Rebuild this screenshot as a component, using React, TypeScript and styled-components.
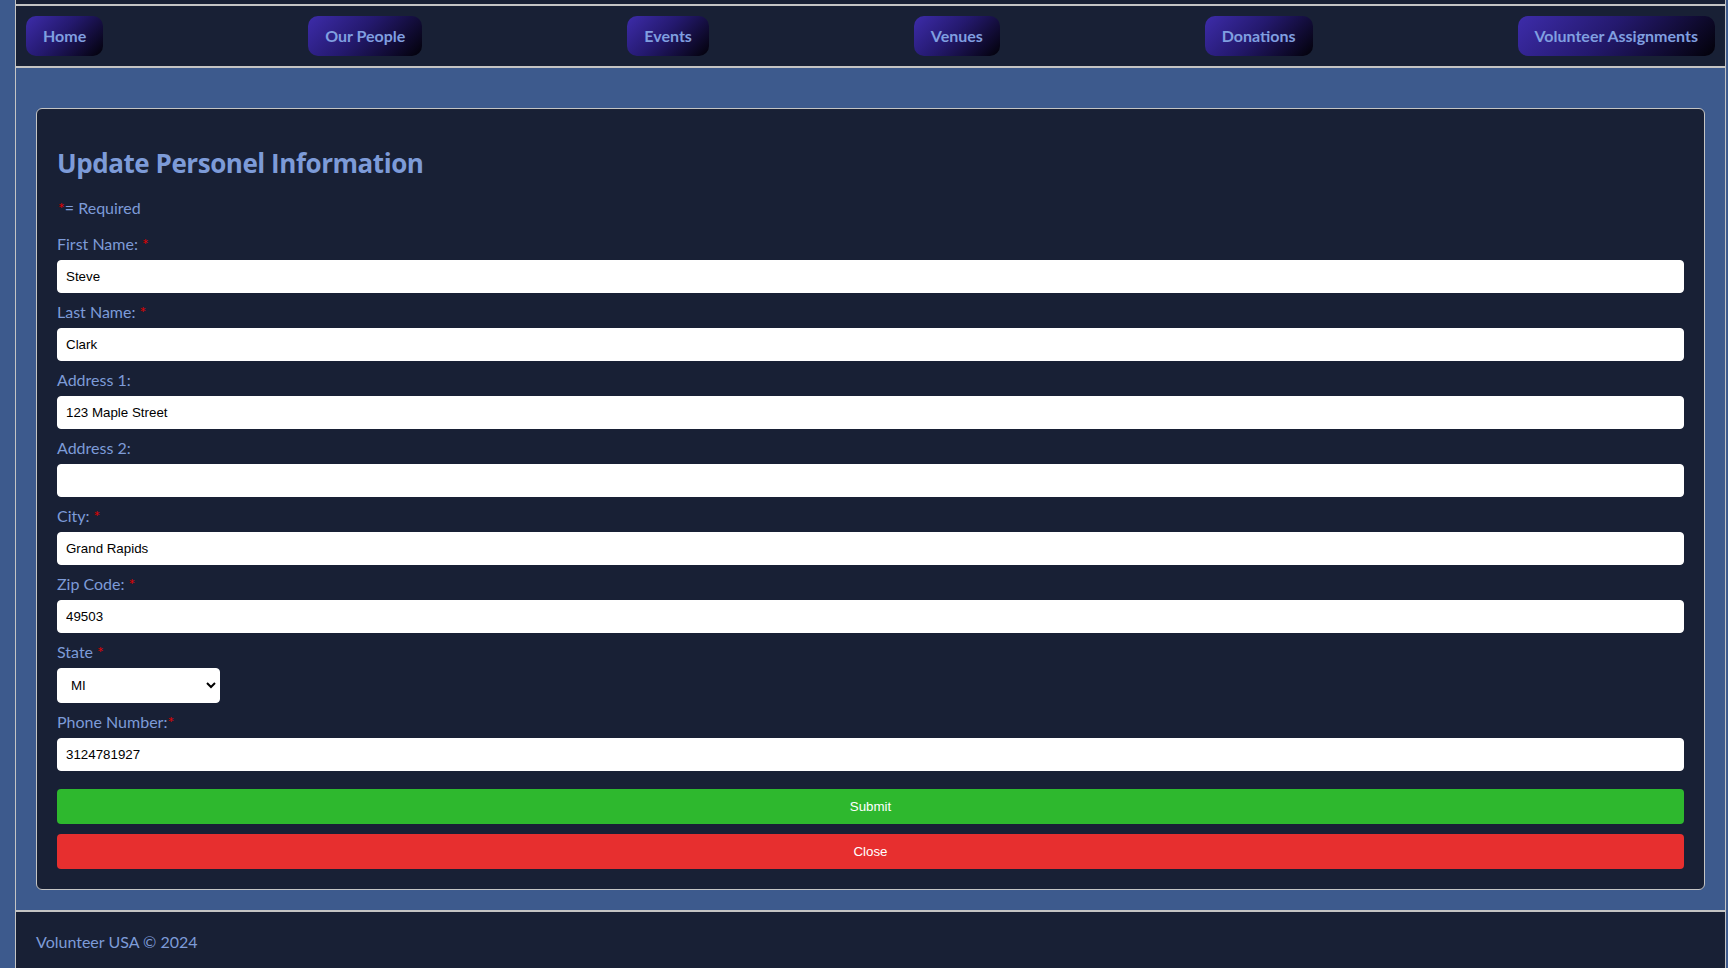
import React from "react";
import styled, { createGlobalStyle } from "styled-components";

const GlobalStyle = createGlobalStyle`
  html, body {
    margin: 0;
    padding: 0;
    background: #3d5a8d;
  }
  body {
    font-family: "Lato", "Liberation Sans", sans-serif;
    overflow: hidden;
  }
  * { box-sizing: border-box; }
`;

const Page = styled.div`
  margin: 0 2px 0 15px;
  border-left: 1px solid #c4c4c4;
  border-right: 1px solid #c4c4c4;
  min-height: 968px;
  display: flex;
  flex-direction: column;
`;

const Masthead = styled.div`
  height: 4px;
  background: #182035;
  border-bottom: 2px solid #c4c4c4;
  box-sizing: content-box;
`;

const Nav = styled.nav`
  background: #182035;
  padding: 10px;
  display: flex;
  justify-content: space-between;
  align-items: center;
  border-bottom: 2px solid #c4c4c4;
`;

const NavButton = styled.a`
  display: inline-block;
  font-family: "Lato", sans-serif;
  font-weight: 700;
  font-size: 16px;
  line-height: 20px;
  color: #809fe0;
  padding: 10px 17px;
  border-radius: 10px;
  background: linear-gradient(135deg, #3d2caa 0%, #24196e 45%, #020108 100%);
  text-decoration: none;
  cursor: pointer;
  white-space: nowrap;
`;

const Main = styled.main`
  flex: 1;
  background: #3d5a8d;
  padding: 40px 20px 20px 20px;
`;

const Card = styled.section`
  background: #182035;
  border: 1px solid #c4c4c4;
  border-radius: 6px;
  padding: 20px;
`;

const Title = styled.h2`
  margin: 18px 0 0 0;
  font-family: "Open Sans", sans-serif;
  font-weight: 700;
  font-size: 26px;
  line-height: 32px;
  color: #7d9bd8;
  letter-spacing: -0.45px;
`;

const Note = styled.p`
  margin: 19px 0 0 1px;
  font-family: "Lato", sans-serif;
  font-size: 16px;
  line-height: 19px;
  color: #7d9bd8;
`;

const Req = styled.span<{ $gap?: number }>`
  color: #e00000;
  margin-left: ${(p) => p.$gap ?? 0}px;
`;

const Form = styled.form`
  display: flex;
  flex-direction: column;
  margin-top: 17px;
`;

const Field = styled.div`
  display: flex;
  flex-direction: column;
  & + & {
    margin-top: 9px;
  }
`;

const Label = styled.label`
  font-family: "Lato", sans-serif;
  font-size: 16px;
  line-height: 19px;
  color: #7d9bd8;
  margin-bottom: 7px;
`;

const TextInput = styled.input`
  width: 100%;
  font-family: "Liberation Sans", Arial, sans-serif;
  font-size: 13.333px;
  line-height: 15px;
  height: 33px;
  padding: 8px 8px;
  border: 1px solid #ffffff;
  border-radius: 4px;
  background: #ffffff;
  color: #000;
  outline: none;
`;

const Select = styled.select`
  width: 163px;
  height: 35px;
  font-family: "Liberation Sans", Arial, sans-serif;
  font-size: 13.333px;
  padding: 0 6px 0 9px;
  border: 1px solid #ffffff;
  border-radius: 4px;
  background: #ffffff;
  color: #000;
  outline: none;
`;

const Actions = styled.div`
  display: flex;
  flex-direction: column;
  gap: 10px;
  margin-top: 18px;
`;

const ActionButton = styled.button<{ $tone: "go" | "stop" }>`
  width: 100%;
  height: 35px;
  border: none;
  border-radius: 4px;
  font-family: "Liberation Sans", Arial, sans-serif;
  font-size: 13.333px;
  color: #ffffff;
  background: ${(p) => (p.$tone === "go" ? "#2eb82e" : "#e72f2f")};
  cursor: pointer;
`;

const Footer = styled.footer`
  background: #182035;
  border-top: 2px solid #c4c4c4;
  padding: 20px 20px 20px 20px;
  font-family: "Lato", sans-serif;
  font-size: 16px;
  line-height: 19px;
  color: #7d9bd8;
`;

const navItems = ["Home", "Our People", "Events", "Venues", "Donations", "Volunteer Assignments"];

type FieldDef = { label: string; value: string; required?: boolean };

const fields: FieldDef[] = [
  { label: "First Name:", value: "Steve", required: true },
  { label: "Last Name:", value: "Clark", required: true },
  { label: "Address 1:", value: "123 Maple Street" },
  { label: "Address 2:", value: "" },
  { label: "City:", value: "Grand Rapids", required: true },
  { label: "Zip Code:", value: "49503", required: true },
];

const states = ["AL", "CA", "IL", "IN", "MI", "NY", "OH", "TX", "WI"];

export default function App() {
  return (
    <>
      <GlobalStyle />
      <Page>
        <Masthead />
        <Nav>
          {navItems.map((n) => (
            <NavButton key={n}>{n}</NavButton>
          ))}
        </Nav>
        <Main>
          <Card>
            <Title>Update Personel Information</Title>
            <Note>
              <Req>*</Req>= Required
            </Note>
            <Form onSubmit={(e) => e.preventDefault()}>
              {fields.map((f) => (
                <Field key={f.label}>
                  <Label>
                    {f.label}
                    {f.required && <Req $gap={4}>*</Req>}
                  </Label>
                  <TextInput defaultValue={f.value} />
                </Field>
              ))}
              <Field>
                <Label>
                  State<Req $gap={4}>*</Req>
                </Label>
                <Select defaultValue="MI">
                  {states.map((s) => (
                    <option key={s} value={s}>
                      {s}
                    </option>
                  ))}
                </Select>
              </Field>
              <Field>
                <Label>
                  Phone Number:<Req>*</Req>
                </Label>
                <TextInput defaultValue="3124781927" />
              </Field>
              <Actions>
                <ActionButton type="submit" $tone="go">Submit</ActionButton>
                <ActionButton type="button" $tone="stop">Close</ActionButton>
              </Actions>
            </Form>
          </Card>
        </Main>
        <Footer>Volunteer USA © 2024</Footer>
      </Page>
    </>
  );
}
